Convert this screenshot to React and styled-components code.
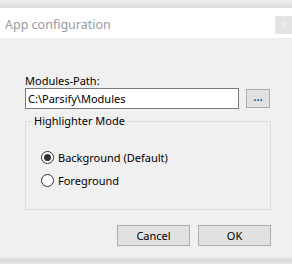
import React, { useState } from "react"
import styled, { createGlobalStyle } from "styled-components"

const GlobalStyle = createGlobalStyle`
  html, body {
    margin: 0;
    padding: 0;
    background: #f0f0f0;
  }
  body {
    font-family: "Noto Sans", "Open Sans", "Liberation Sans", sans-serif;
    font-size: 11px;
    color: #000;
  }
`

const modes = [
  { id: "background", label: "Background (Default)" },
  { id: "foreground", label: "Foreground" },
]

const App = () => {
  const [mode, setMode] = useState("background")

  return (
    <Window>
      <GlobalStyle />
      <TopShade />
      <TitleBar>
        <Title>App configuration</Title>
        <CloseButton>x</CloseButton>
      </TitleBar>
      <Body>
        <Label>Modules-Path:</Label>
        <PathRow>
          <PathInput defaultValue="C:\Parsify\Modules" />
          <BrowseButton>...</BrowseButton>
        </PathRow>
        <Group>
          <Legend>Highlighter Mode</Legend>
          <RadioList>
            {modes.map((item) => (
              <RadioRow key={item.id} onClick={() => setMode(item.id)}>
                <RadioCircle checked={mode === item.id} />
                <span>{item.label}</span>
              </RadioRow>
            ))}
          </RadioList>
        </Group>
        <Buttons>
          <DialogButton>Cancel</DialogButton>
          <DialogButton>OK</DialogButton>
        </Buttons>
      </Body>
      <BottomShade />
    </Window>
  )
}

export default App

const Window = styled.div`
  width: 292px;
  height: 264px;
  display: flex;
  flex-direction: column;
  overflow: hidden;
  background: #f0f0f0;
`

const TopShade = styled.div`
  height: 8px;
  flex-shrink: 0;
  background: linear-gradient(#ececec, #e4e4e4 60%, #dcdcdc);
`

const TitleBar = styled.div`
  height: 30px;
  flex-shrink: 0;
  background: #fff;
  display: flex;
  align-items: flex-start;
  justify-content: space-between;
`

const Title = styled.div`
  font-family: "Noto Sans", "Open Sans", sans-serif;
  font-size: 12.5px;
  color: #9a9aa4;
  padding: 7px 0 0 5px;
  line-height: 20px;
`

const CloseButton = styled.div`
  width: 17px;
  height: 18px;
  margin-top: 8px;
  background: #e3e3e3;
  color: #f4f4f4;
  font-size: 10px;
  line-height: 17px;
  text-align: center;
`

const Body = styled.div`
  flex: 1;
  display: flex;
  flex-direction: column;
  padding: 36px 22px 0 25px;
`

const Label = styled.div`
  line-height: 14px;
  height: 14px;
`

const PathRow = styled.div`
  display: flex;
  align-items: center;
  gap: 7px;
`

const PathInput = styled.input`
  box-sizing: border-box;
  width: 214px;
  height: 21px;
  border: 1px solid #7a7a7a;
  background: #fff;
  padding: 0 2px;
  font: inherit;
  color: #000;
  outline: none;
`

const BrowseButton = styled.button`
  box-sizing: border-box;
  width: 24px;
  height: 19px;
  padding: 0 0 4px;
  border: 1px solid #adadad;
  background: #e1e1e1;
  color: #005a9e;
  font: inherit;
  font-size: 11px;
  font-weight: bold;
  line-height: 10px;
`

const Group = styled.fieldset`
  box-sizing: border-box;
  margin: 4px 0 0;
  width: 246px;
  height: 97px;
  padding: 0;
  border: 1px solid #dcdcdc;
`

const Legend = styled.legend`
  padding: 0 2px;
  margin-left: 6px;
  line-height: 16px;
`

const RadioList = styled.div`
  display: flex;
  flex-direction: column;
  gap: 8px;
  padding: 21px 0 0 15px;
`

const RadioRow = styled.label`
  display: flex;
  align-items: center;
  gap: 4px;
  height: 15px;
  line-height: 15px;
  cursor: default;
`

const RadioCircle = styled.span`
  box-sizing: border-box;
  width: 13px;
  height: 13px;
  border-radius: 50%;
  border: 1px solid #333;
  background: #fff;
  display: flex;
  align-items: center;
  justify-content: center;

  &::after {
    content: "";
    width: 7px;
    height: 7px;
    border-radius: 50%;
    background: ${({ checked }) => (checked ? "#333" : "transparent")};
  }
`

const Buttons = styled.div`
  display: flex;
  justify-content: flex-end;
  gap: 8px;
  margin-top: 15px;
  width: 246px;
`

const DialogButton = styled.button`
  box-sizing: border-box;
  width: 73px;
  height: 21px;
  border: 1px solid #adadad;
  background: #e1e1e1;
  font: inherit;
  color: #000;
  padding: 0;
`

const BottomShade = styled.div`
  height: 6px;
  flex-shrink: 0;
  background: linear-gradient(#e2e2e2, #d8d8d8 40%, #e8e8e8);
`
